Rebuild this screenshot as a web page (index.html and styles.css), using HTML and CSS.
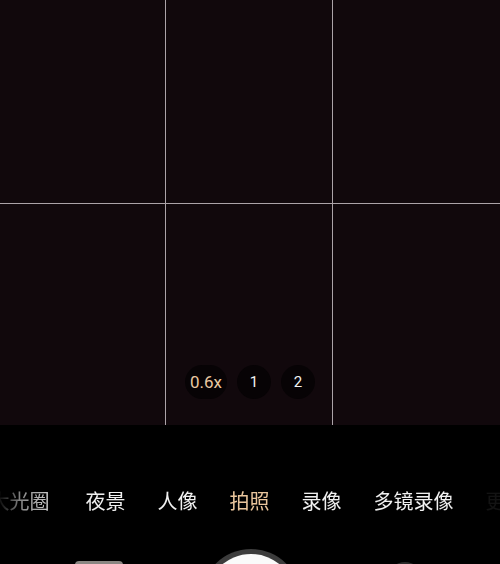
FILE: index.html
```html
<!DOCTYPE html>
<html lang="zh">
<head>
<meta charset="utf-8">
<link rel="stylesheet" href="styles.css">
</head>
<body>
<div class="screen">
  <div class="viewfinder">
    <div class="grid">
      <div class="cell"></div><div class="cell"></div><div class="cell"></div>
      <div class="cell"></div><div class="cell"></div><div class="cell"></div>
      <div class="cell"></div><div class="cell"></div><div class="cell"></div>
    </div>
    <div class="zoom">
      <span class="zbtn active">0.6x</span>
      <span class="zbtn">1</span>
      <span class="zbtn">2</span>
    </div>
  </div>
  <div class="panel">
    <div class="modes">
      <span class="mode">大光圈</span>
      <span class="mode">夜景</span>
      <span class="mode">人像</span>
      <span class="mode active">拍照</span>
      <span class="mode">录像</span>
      <span class="mode">多镜录像</span>
      <span class="mode">更多</span>
    </div>
    <div class="controls">
      <div class="thumb"></div>
      <div class="shutter"><div class="shutter-inner"></div></div>
      <div class="switch"></div>
    </div>
  </div>
</div>
</body>
</html>
```

FILE: styles.css
```css
html, body {
  margin: 0;
  padding: 0;
  background: #000;
}
.screen {
  width: 500px;
  height: 564px;
  overflow: hidden;
  display: flex;
  flex-direction: column;
  font-family: "Noto Sans CJK SC", "Noto Sans", sans-serif;
}
.viewfinder {
  position: relative;
  height: 425px;
  flex: none;
  background: #11080c;
  overflow: hidden;
}
.grid {
  display: grid;
  grid-template-columns: 166px 167px 167px;
  grid-template-rows: 204px 204px 204px;
}
.cell {
  border-right: 1px solid #aca3a8;
  border-bottom: 1px solid #aca3a8;
}
.cell:nth-child(3n) {
  border-right: none;
}
.cell:nth-child(n+4) {
  border-bottom: none;
}
.zoom {
  position: absolute;
  left: 0;
  right: 0;
  top: 365px;
  display: flex;
  justify-content: center;
  gap: 10px;
}
.zbtn {
  width: 34px;
  height: 34px;
  border-radius: 17px;
  background: #070305;
  color: #f2f2f2;
  font-family: "Roboto", "Noto Sans", sans-serif;
  font-size: 15px;
  line-height: 34px;
  text-align: center;
}
.zbtn.active {
  width: 42px;
  color: #eac9a1;
  font-size: 17px;
}
.panel {
  flex: 1;
  background: #000;
  display: flex;
  flex-direction: column;
}
.modes {
  display: flex;
  gap: 32px;
  margin-left: -10.5px;
  margin-top: 61px;
  white-space: nowrap;
  -webkit-mask-image: linear-gradient(to right, rgba(0,0,0,0) 0px, rgba(0,0,0,0.1) 12px, rgba(0,0,0,0.55) 30px, #000 75px, #000 460px, rgba(0,0,0,0.08) 490px);
  mask-image: linear-gradient(to right, rgba(0,0,0,0) 0px, rgba(0,0,0,0.1) 12px, rgba(0,0,0,0.55) 30px, #000 75px, #000 460px, rgba(0,0,0,0.08) 490px);
}
.mode {
  font-size: 20px;
  line-height: 30px;
  color: #f0f0f0;
  flex: none;
}
.mode:first-child {
  margin-right: 4px;
}
.mode.active {
  color: #e9c59c;
}
.controls {
  position: relative;
  flex: 1;
}
.thumb {
  position: absolute;
  left: 75px;
  top: 45px;
  width: 48px;
  height: 48px;
  border-radius: 4px;
  background: #8a8682;
}
.shutter {
  position: absolute;
  left: 201px;
  top: 33px;
  width: 100px;
  height: 100px;
  border-radius: 50%;
  background: #3c3c3c;
  display: flex;
  align-items: center;
  justify-content: center;
}
.shutter-inner {
  width: 90px;
  height: 90px;
  border-radius: 50%;
  background: #fafafa;
}
.switch {
  position: absolute;
  left: 388px;
  top: 46px;
  width: 34px;
  height: 34px;
  border-radius: 50%;
  background: #2a2a2a;
}
```
